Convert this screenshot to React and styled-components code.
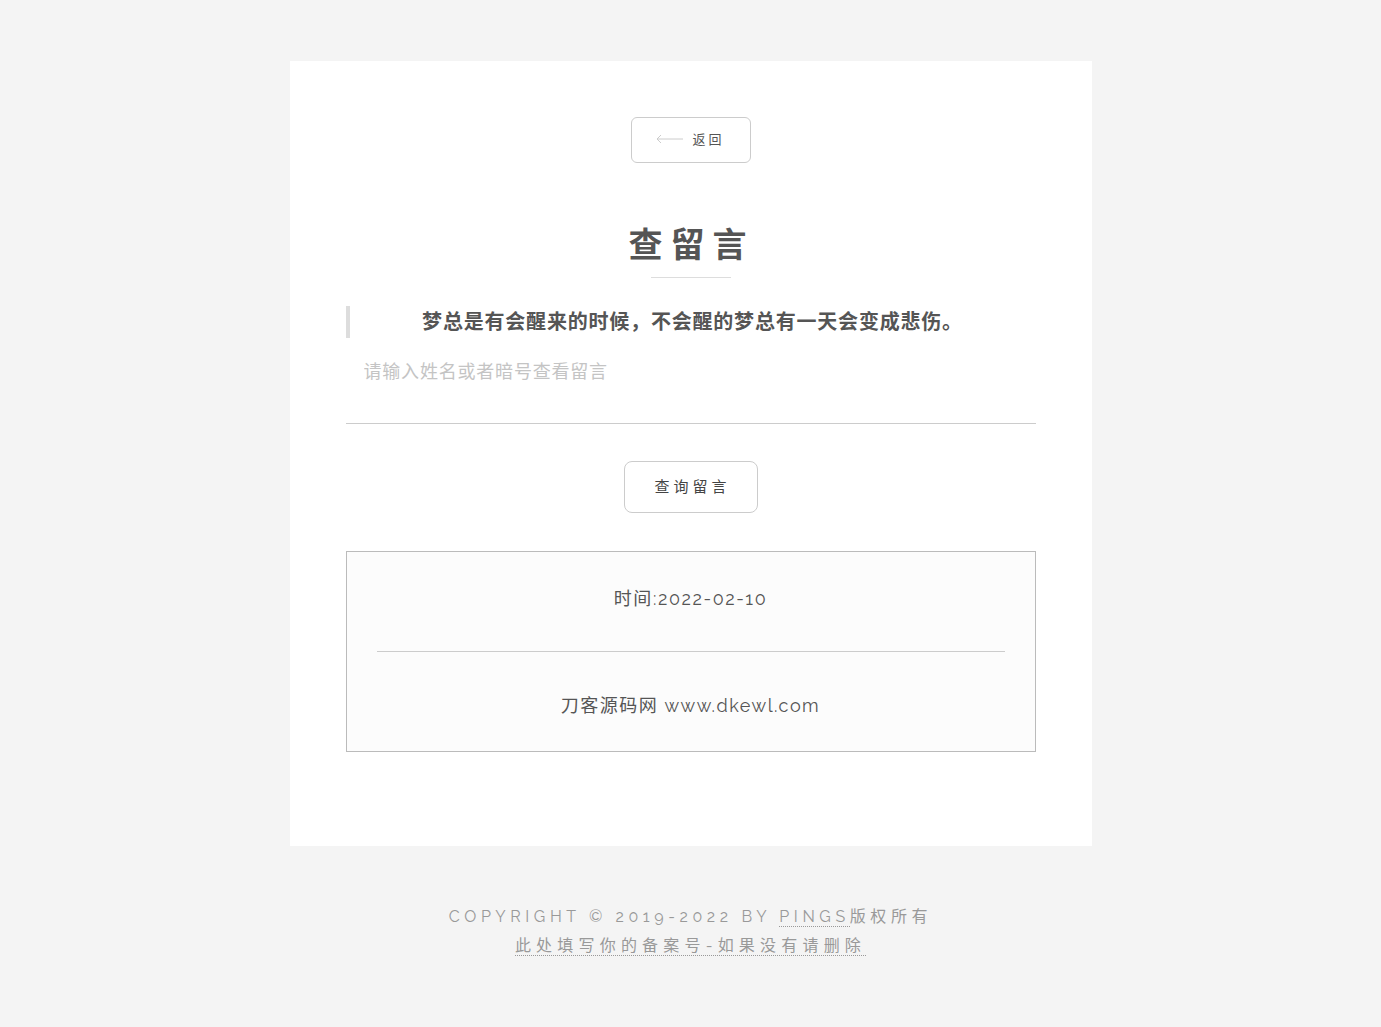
import React from 'react';
import styled, { createGlobalStyle } from 'styled-components';

const font = `Raleway, Lato, "Noto Sans CJK SC", sans-serif`;

const GlobalStyle = createGlobalStyle`
  html, body {
    margin: 0;
    padding: 0;
    background: #f4f4f4;
  }
  body {
    font-family: ${font};
    color: #555;
  }
  * {
    box-sizing: border-box;
  }
`;

const Page = styled.div`
  min-height: 1027px;
  padding-top: 61px;
  display: flex;
  flex-direction: column;
  align-items: center;
`;

const Panel = styled.main`
  width: 802px;
  height: 785px;
  background: #fff;
  padding: 56px 56px 0;
  display: flex;
  flex-direction: column;
  align-items: center;
`;

const BackButton = styled.a`
  width: 120px;
  height: 46px;
  border: 1px solid #ccc;
  border-radius: 6px;
  display: flex;
  align-items: center;
  justify-content: center;
  gap: 8px;
  font-size: 13px;
  letter-spacing: 3px;
  color: #555;
  cursor: pointer;
  padding: 0 0 3px 0;
`;

const Title = styled.h1`
  margin: 60px 0 0;
  font-size: 34px;
  font-weight: 700;
  letter-spacing: 8px;
  padding-left: 2px;
  line-height: 44px;
  color: #555;
`;

const TitleRule = styled.div`
  width: 80px;
  height: 1px;
  background: #ddd;
  margin-top: 10px;
`;

const Quote = styled.blockquote`
  align-self: stretch;
  margin: 28px 0 0;
  border-left: 4px solid #ddd;
  height: 32px;
  display: flex;
  align-items: center;
  justify-content: center;
  font-size: 20px;
  font-weight: 700;
  letter-spacing: 0.8px;
  color: #555;
  padding: 0 0 4px 0;
`;

const Field = styled.input`
  align-self: stretch;
  margin-top: 16px;
  height: 70px;
  border: 0;
  border-bottom: 1px solid #ccc;
  padding: 0 18px 34px;
  font-family: ${font};
  font-size: 18px;
  letter-spacing: 0.8px;
  color: #555;
  outline: none;
  background: transparent;
  &::placeholder {
    color: #c4c4c4;
  }
`;

const QueryButton = styled.button`
  margin-top: 37px;
  width: 134px;
  height: 52px;
  border: 1px solid #ccc;
  border-radius: 8px;
  background: #fff;
  font-family: ${font};
  font-size: 15px;
  letter-spacing: 4px;
  padding: 0 0 4px 4px;
  color: #444;
  cursor: pointer;
`;

const Card = styled.section`
  align-self: stretch;
  margin-top: 38px;
  height: 201px;
  border: 1px solid #bbb;
  background: #fcfcfc;
  padding: 0 30px;
  display: flex;
  flex-direction: column;
`;

const CardRow = styled.div`
  height: ${props => props.h}px;
  display: flex;
  align-items: center;
  justify-content: center;
  font-size: 18px;
  color: #555;
  letter-spacing: ${props => props.spacing || 0}px;
  padding: ${props => props.pad || '0'};
  border-bottom: ${props => (props.divider ? '1px solid #ccc' : 'none')};
`;

const Footer = styled.footer`
  margin-top: 56px;
  text-align: center;
  font-size: 16px;
  line-height: 29px;
  color: #999;
`;

const FooterLink = styled.a`
  color: #999;
  text-decoration: none;
  border-bottom: 1px dotted #999;
`;

const Note = styled.div`
  letter-spacing: ${props => props.spacing}px;
`;

const Arrow = () => (
  <svg width="28" height="10" viewBox="0 0 28 10" fill="none">
    <path d="M27 5H1M5 1L1 5L5 9" stroke="#ccc" strokeWidth="1" />
  </svg>
);

export default function App() {
  return (
    <>
      <GlobalStyle />
      <Page>
        <Panel>
          <BackButton>
            <Arrow />
            <span>返回</span>
          </BackButton>
          <Title>查留言</Title>
          <TitleRule />
          <Quote>梦总是有会醒来的时候，不会醒的梦总有一天会变成悲伤。</Quote>
          <Field placeholder="请输入姓名或者暗号查看留言" />
          <QueryButton>查询留言</QueryButton>
          <Card>
            <CardRow h={100} divider spacing={1.6} pad="0 0 10px">
              时间:2022-02-10
            </CardRow>
            <CardRow h={99} spacing={1.5} pad="4px 0 0">
              刀客源码网 www.dkewl.com
            </CardRow>
          </Card>
        </Panel>
        <Footer>
          <Note spacing={4.6}>
            COPYRIGHT © 2019-2022 BY <FooterLink>PINGS</FooterLink>版权所有
          </Note>
          <Note spacing={5.2}>
            <FooterLink>此处填写你的备案号-如果没有请删除</FooterLink>
          </Note>
        </Footer>
      </Page>
    </>
  );
}
